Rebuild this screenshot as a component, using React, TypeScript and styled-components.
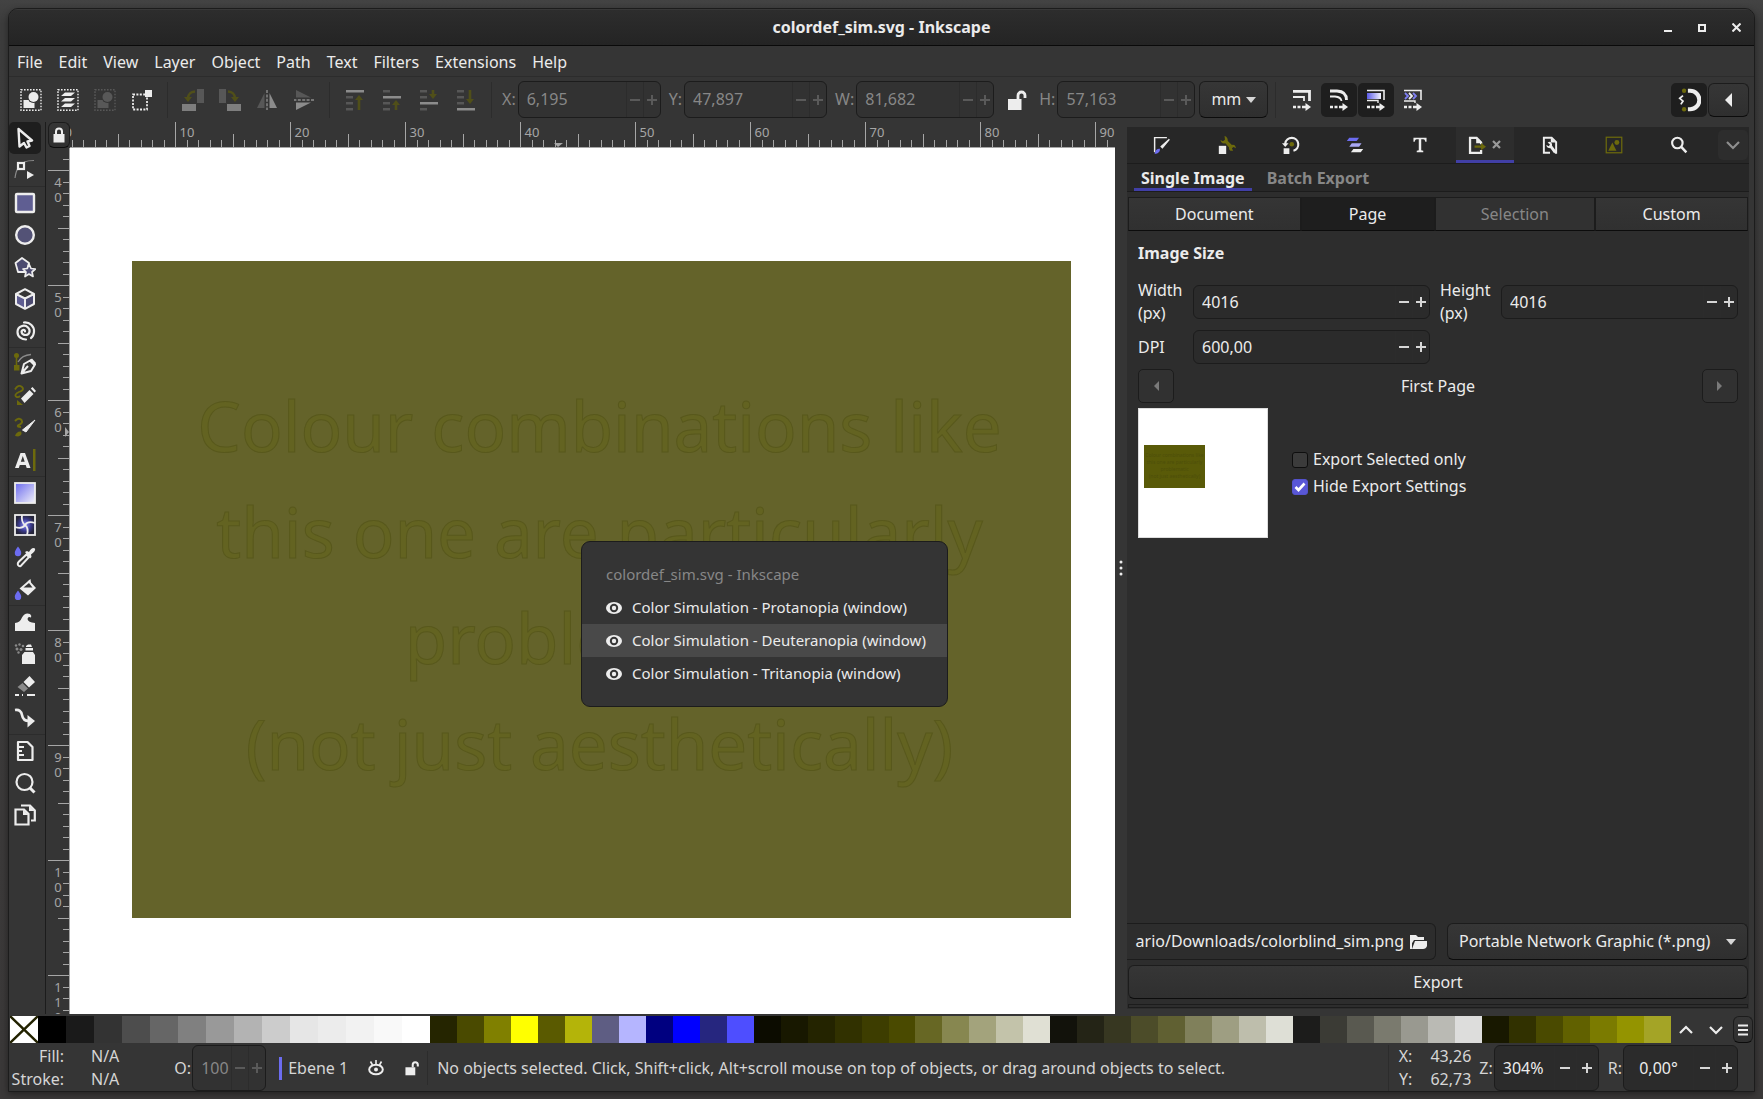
import React, { ReactNode, useId } from "react";
import styled, { createGlobalStyle, css } from "styled-components";

const c = {
  window: "#353535",
  panel: "#2d2d2d",
  strip: "#272727",
  edge: "#1c1c1c",
  line: "#2c2c2c",
  text: "#ebebeb",
  soft: "#d6d6d6",
  dim: "#878787",
  faint: "#5a5a5a",
  ruler: "#a6a6a6",
  accent: "#413fa6",
  blue: "#6c6cf0",
  olive: "#6d6a0c",
  pressed: "#1e1e1e",
};

const GlobalStyle = createGlobalStyle`
  * { box-sizing: border-box; }
  html, body, #root { height: 100%; }
  body {
    margin: 0;
    background: #3c3c3c;
    color: ${c.text};
    font: 16px/23px "Noto Sans", "Open Sans", sans-serif;
  }
  button, input, select { font: inherit; color: inherit; margin: 0; }
  button { padding: 0; }
  svg { display: block; flex: none; }
`;

/* ---------- window frame ---------- */

const Desktop = styled.div`
  height: 100vh;
  min-height: 700px;
  padding: 8px 8px 7px;
  background: linear-gradient(#434343, #3c3c3c 24px, #3a3838);
`;

const Window = styled.div`
  height: 100%;
  display: flex;
  flex-direction: column;
  overflow: hidden;
  background: ${c.window};
  border: 1px solid ${c.edge};
  border-radius: 10px 10px 0 0;
  box-shadow: 0 2px 6px rgba(0, 0, 0, 0.4);
`;

const TitleBar = styled.header`
  height: 37px;
  flex: none;
  display: grid;
  grid-template-columns: 1fr auto 1fr;
  align-items: center;
  background: linear-gradient(#2d2d2d, #242424);
  border-top: 1px solid #383838;
  border-bottom: 1px solid #0a0a0a;
`;

const Title = styled.h1`
  grid-column: 2;
  margin: 0;
  font-size: 16px;
  font-weight: 700;
`;

const WindowButtons = styled.div`
  display: flex;
  justify-content: flex-end;
  padding-right: 1px;
`;

const WindowButton = styled.button`
  width: 34px;
  height: 30px;
  display: grid;
  place-items: center;
  border: 0;
  background: none;
`;

const MenuBar = styled.nav`
  height: 31px;
  flex: none;
  display: flex;
  align-items: center;
  padding-top: 2px;
  border-bottom: 1px solid ${c.line};
`;

const MenuItem = styled.button`
  padding: 0 8px;
  border: 0;
  background: none;
`;

/* ---------- shared parts ---------- */

const raised = css`
  background: linear-gradient(#363636, #2f2f2f);
  border: 1px solid ${c.edge};
  border-bottom-color: #0c0c0c;
`;

const Bar = styled.div<{ $h?: number }>`
  width: 1px;
  height: ${(p) => p.$h ?? 36}px;
  background: ${c.line};
  flex: none;
`;

const IconButton = styled.button<{ $on?: boolean; $w?: number; $h?: number }>`
  width: ${(p) => p.$w ?? 37}px;
  height: ${(p) => p.$h ?? 34}px;
  flex: none;
  display: grid;
  place-items: center;
  border: 0;
  border-radius: 5px;
  background: ${(p) => (p.$on ? c.pressed : "none")};
`;

const RaisedButton = styled.button<{ $w?: number; $h?: number }>`
  ${raised}
  width: ${(p) => (p.$w ? p.$w + "px" : "auto")};
  height: ${(p) => p.$h ?? 34}px;
  flex: none;
  display: grid;
  place-items: center;
  border-radius: 6px;
`;

const SpinBox = styled.div<{ $w?: number; $h: number; $off?: boolean }>`
  display: flex;
  width: ${(p) => (p.$w ? p.$w + "px" : "100%")};
  height: ${(p) => p.$h}px;
  flex: ${(p) => (p.$w ? "none" : "1")};
  overflow: hidden;
  border: 1px solid ${c.edge};
  border-radius: 6px;
  background: ${(p) => (p.$off ? "#323232" : "#2b2b2b")};
  color: ${(p) => (p.$off ? c.dim : c.text)};
`;

const SpinInput = styled.input<{ $pad: number; $center?: boolean }>`
  flex: 1;
  min-width: 0;
  width: 0;
  border: 0;
  outline: 0;
  background: none;
  padding: 0 0 0 ${(p) => p.$pad}px;
  text-align: ${(p) => (p.$center ? "center" : "left")};
`;

const SpinStep = styled.button<{ $w: number; $off?: boolean }>`
  width: ${(p) => p.$w}px;
  flex: none;
  display: grid;
  place-items: center;
  border: 0;
  border-left: 1px solid ${c.line};
  background: none;
  color: ${(p) => (p.$off ? c.faint : c.soft)};
`;

function Spin(p: {
  id: string;
  value: string;
  w?: number;
  h: number;
  step?: number;
  off?: boolean;
  pad?: number;
  center?: boolean;
}) {
  const step = p.step ?? 17;
  return (
    <SpinBox $w={p.w} $h={p.h} $off={p.off}>
      <SpinInput id={p.id} defaultValue={p.value} $pad={p.pad ?? 8} $center={p.center} disabled={p.off} />
      <SpinStep $w={step} $off={p.off} disabled={p.off} aria-label="Decrease">
        <svg width="10" height="10" viewBox="0 0 10 10">
          <path d="M0 5H10" stroke="currentColor" strokeWidth="2" />
        </svg>
      </SpinStep>
      <SpinStep $w={step} $off={p.off} disabled={p.off} aria-label="Increase">
        <svg width="10" height="10" viewBox="0 0 10 10">
          <path d="M0 5H10M5 0V10" stroke="currentColor" strokeWidth="2" />
        </svg>
      </SpinStep>
    </SpinBox>
  );
}

const SelectWrap = styled.div<{ $w?: number; $h: number }>`
  display: grid;
  width: ${(p) => (p.$w ? p.$w + "px" : "100%")};
  height: ${(p) => p.$h}px;
  align-items: center;
  > * {
    grid-area: 1 / 1;
  }
  > svg {
    justify-self: end;
    margin-right: 12px;
    pointer-events: none;
  }
`;

const Select = styled.select`
  ${raised}
  appearance: none;
  width: 100%;
  height: 100%;
  padding: 0 11px;
  border-radius: 6px;
`;

const Caret = () => (
  <svg width="10" height="6" viewBox="0 0 10 6">
    <path d="M0 0H10L5 6Z" fill={c.soft} />
  </svg>
);

/* ---------- icons ---------- */

function Icon({ size = 22, children }: { size?: number; children: ReactNode }) {
  return (
    <svg width={size} height={size} viewBox="0 0 22 22" fill="none">
      {children}
    </svg>
  );
}

const W = "#ededed";
const dots = { strokeWidth: 1.4, strokeDasharray: "1.6 1.4" };

const SelectAll = ({ f = W }: { f?: string }) => (
  <Icon>
    <rect x="1" y="0.7" width="20" height="20.6" stroke={f} {...dots} />
    <rect x="3.5" y="11" width="11" height="8" fill={f} />
    <circle cx="13.5" cy="8" r="6" fill={c.window} />
    <circle cx="13.5" cy="8" r="5" fill={f} />
  </Icon>
);

const SelectLayers = () => (
  <Icon>
    <rect x="1" y="0.7" width="20" height="20.6" stroke={W} {...dots} />
    <path d="M8 3.5H18L14 7H4ZM8 9H18L14 12.5H4ZM8 14.5H18L14 18H4Z" fill={W} />
  </Icon>
);

const Deselect = () => (
  <Icon>
    <rect x="2" y="5.5" width="14" height="15" stroke={W} strokeWidth="1.8" strokeDasharray="2 1.4" />
    <rect x="14" y="1" width="7" height="7" fill={W} />
  </Icon>
);

const dimOlive = "#504f19";

const Rotate = ({ cw }: { cw?: boolean }) => (
  <Icon>
    <g transform={cw ? "matrix(-1 0 0 1 22 0)" : undefined}>
      <rect x="15" y="0" width="7" height="14" fill="#575757" />
      <rect x="0" y="15" width="14" height="7" fill="#7e7e7e" />
      <path d="M13 2.5C8 3 6.5 5 6 9" stroke={dimOlive} strokeWidth="2.6" />
      <path d="M2 8H10L6 13Z" fill={dimOlive} />
    </g>
  </Icon>
);

const Flip = ({ v }: { v?: boolean }) => (
  <Icon>
    <g transform={v ? "rotate(90 11 11)" : undefined}>
      <path d="M8.5 4V19H1Z" fill="#575757" />
      <path d="M13.5 4V19H21Z" fill="#8c8c8c" />
      <path d="M11 1V21" stroke="#8c8c8c" strokeWidth="1.4" strokeDasharray="3 1.4" />
    </g>
  </Icon>
);

const Order = ({ at, up, long }: { at: number; up?: boolean; long?: boolean }) => {
  const rows = [1, 7, 13, 19];
  const a = up ? (long ? 6 : 11) : 1;
  const b = up ? 21 : long ? 15 : 10;
  return (
    <Icon>
      {rows.map((y, i) => (
        <rect key={y} x="2" y={y} width={i === at ? 18 : 7} height="2.5" fill={i === at ? "#8c8c8c" : "#575757"} />
      ))}
      <path d={`M15 ${up ? a + 4 : a}V${up ? b : b - 4}`} stroke={dimOlive} strokeWidth="2.6" />
      <path d={up ? `M11 ${a + 5}H19L15 ${a}Z` : `M11 ${b - 5}H19L15 ${b}Z`} fill={dimOlive} />
    </Icon>
  );
};

const LockOpen = ({ size = 22 }: { size?: number }) => (
  <Icon size={size}>
    <rect x="2" y="10" width="13.5" height="11" fill={W} />
    <path d="M12 10V6.5A3.5 3.5 0 0 1 19 6.5V9" stroke={W} strokeWidth="2.8" />
  </Icon>
);

const LockClosed = () => (
  <svg width="12" height="16" viewBox="0 0 12 16" fill="none">
    <rect x="0.5" y="7" width="11" height="8.5" fill={W} />
    <path d="M3 7V4.5A3 3 0 0 1 9 4.5V7" stroke={W} strokeWidth="2" />
  </svg>
);

const Affect = ({ kind }: { kind: "stroke" | "corner" | "gradient" | "pattern" }) => (
  <Icon>
    <path d="M2 18H5M6.5 18H9.5M11 18H16" stroke={W} strokeWidth="2.4" />
    <path d="M14.5 14L20 18L14.5 22Z" fill={W} />
    {kind === "stroke" && (
      <>
        <path d="M2 2.3H18.5V12" stroke={W} strokeWidth="2.8" />
        <path d="M2 8H13V12" stroke={W} strokeWidth="1.8" />
      </>
    )}
    {kind === "corner" && (
      <>
        <path d="M2 2H9Q18.5 2.5 18.5 11" stroke={W} strokeWidth="2.8" />
        <path d="M2 7.5H7Q13 8 13.5 12" stroke={W} strokeWidth="1.8" />
      </>
    )}
    {kind === "gradient" && (
      <>
        <defs>
          <linearGradient id="affectFill">
            <stop offset="0" stopColor="#5b5be8" />
            <stop offset="1" stopColor="#f4f4ff" />
          </linearGradient>
        </defs>
        <path d="M2 1.500H19V11" stroke={W} strokeWidth="1.600" />
        <rect x="2" y="4" width="14" height="6" fill="url(#affectFill)" />
        <path d="M2 11.5H13V14" stroke={W} strokeWidth="1.4" />
      </>
    )}
    {kind === "pattern" && (
      <>
        <path d="M2 1.5H19V11" stroke={W} strokeWidth="1.6" />
        <path d="M3 4L6 7L3 10M11 4L14 7L11 10" stroke="#7f7ff2" strokeWidth="1.8" />
        <path d="M7 4L10 7L7 10" stroke={W} strokeWidth="1.8" />
        <path d="M2 12H13V14" stroke={W} strokeWidth="1.4" />
      </>
    )}
  </Icon>
);

const SnapIcon = () => (
  <Icon size={24}>
    <path d="M10 2.5H12A8.5 8.5 0 0 1 12 19.5H10" stroke={W} strokeWidth="3.8" />
    <circle cx="6.5" cy="2.5" r="2" fill={c.olive} />
    <circle cx="6.5" cy="19.5" r="2" fill={c.olive} />
    <path d="M5.500 7L2.5 9.5L5.5 12L3.5 15" stroke={W} strokeWidth="1.6" />
  </Icon>
);

const tools: Record<string, ReactNode> = {
  Selector: <path d="M4.500 2L18 13.5L13.5 14.5L15.5 19L12.500 20.5L10 16L5.500 19.5Z" stroke={W} strokeWidth="2.4" strokeLinejoin="round" />,
  Node: (
    <>
      <path d="M1 19Q2 11 5 8M10 3Q14 1.5 20 1.5" stroke="#8a8a8a" strokeWidth="1.2" />
      <rect x="4" y="4" width="6" height="6" stroke={W} strokeWidth="2.2" />
      <path d="M13 12L20 16L13 20Z" fill={W} />
    </>
  ),
  Rectangle: <rect x="2" y="2" width="18" height="18" rx="1" fill="#5f5e92" stroke={W} strokeWidth="2.4" />,
  Ellipse: <circle cx="11" cy="11" r="8.8" fill="#535276" stroke={W} strokeWidth="2.4" />,
  Star: (
    <>
      <path d="M8 2L15 7L12.5 16H4L1.5 7Z" fill="#4b4a70" stroke={W} strokeWidth="1.8" strokeLinejoin="round" />
      <path d="M15 8L17 12.5L21.3 13L18 16L19 20.5L15 18L11 20.5L12 16L9 13L13.3 12.5Z" fill="#4b4a70" stroke={W} strokeWidth="1.7" strokeLinejoin="round" />
    </>
  ),
  Box: (
    <>
      <path d="M2 6L11 10.5V20.5L2 16Z" fill="#5f5e92" />
      <path d="M20 6L11 10.5V20.5L20 16Z" fill="#4b4a70" />
      <path d="M11 1.2L20 6V16L11 20.8L2 16V6ZM2 6L11 10.5L20 6M11 10.5V20" stroke={W} strokeWidth="2" strokeLinejoin="round" />
    </>
  ),
  Spiral: <path d="M11 11.5Q11 9.5 9 10C6.5 11 7.5 15 11.5 15C15.5 15 17 10.5 14 7.5C10.5 4 3.5 6 3.5 12C3.5 17 8 19.5 12 19.5M10 2.5C16 2 20.5 6.5 20 12Q19.5 16.5 17 18" stroke={W} strokeWidth="2.2" strokeLinecap="round" />,
  Pen: (
    <>
      <path d="M2.5 2V16" stroke={c.olive} strokeWidth="1.6" />
      <circle cx="2.5" cy="2.5" r="2.5" fill={c.olive} />
      <rect x="0" y="12" width="5.5" height="5.5" fill={c.olive} />
      <path d="M4 9Q8 2 17 1.5" stroke="#8a8a8a" strokeWidth="1.3" />
      <path d="M7.5 20.5L10 11L17 7L21 11.5L17 18L7.5 20.5L14 13" stroke={W} strokeWidth="2" strokeLinejoin="round" />
      <path d="M15 8L18 5.5L22 10L20 13Z" fill={W} />
    </>
  ),
  Pencil: (
    <>
      <path d="M1 4.500Q4 -1 8 2Q11 5 5 7Q0 9.500 2 11.500Q4 13 6 11" stroke={c.olive} strokeWidth="1.8" />
      <path d="M3 15L9 20H3Z" fill={c.olive} />
      <path d="M7 13.5L15.5 5L19.5 9L10.5 18Z" fill={W} />
      <path d="M16.8 3.5L18.5 2L22 6L20.5 7.5Z" fill={W} />
    </>
  ),
  Calligraphy: (
    <>
      <path d="M1 4Q5 0 7.5 3Q9.5 6 4 8.500Q3 10 7 10" stroke={c.olive} strokeWidth="2" />
      <path d="M1 19Q2.5 14 7 14.5Q9 18 4 19.5Z" fill={c.olive} />
      <path d="M21 3L12 15L8.5 13Z" fill={W} stroke={W} />
    </>
  ),
  Text: (
    <>
      <path d="M1 19L6.5 4H11L16.5 19H12.7L11.7 16H5.8L4.8 19ZM6.8 12.8H10.7L8.8 7Z" fill={W} fillRule="evenodd" />
      <rect x="19" y="0" width="2.5" height="22" fill={c.olive} />
    </>
  ),
  Gradient: (
    <>
      <defs>
        <linearGradient id="toolGradient" x1="0" y1="0" x2="1" y2="1">
          <stop offset="0" stopColor="#6a69ef" />
          <stop offset="1" stopColor="#f2f2f8" />
        </linearGradient>
      </defs>
      <rect x="1" y="1" width="20" height="20" fill="url(#toolGradient)" stroke={W} strokeWidth="1.8" />
    </>
  ),
  Mesh: (
    <>
      <defs>
        <radialGradient id="toolMesh">
          <stop offset="0" stopColor="#8c8cff" />
          <stop offset="0.6" stopColor="#3a3a8c" />
          <stop offset="1" stopColor="#25253a" />
        </radialGradient>
      </defs>
      <rect x="1" y="1" width="20" height="20" fill="url(#toolMesh)" stroke={W} strokeWidth="1.8" />
      <path d="M8 1Q7 8 11 11Q15 14 13 21M1 13Q8 15.500 11 11Q14 6.500 21 9" stroke={W} strokeWidth="1.8" />
    </>
  ),
  Dropper: (
    <>
      <path d="M4 0.5Q7.5 5 7.2 7A3.2 3.2 0 0 1 0.8 7Q0.5 5 4 0.5Z" fill={c.blue} />
      <path d="M5 20Q2.5 18 5 15.5L12.5 8.5L15 11L8 18.5Q6.5 21 5 20Z" stroke={W} strokeWidth="2" />
      <path d="M11 6L13 5L15 6Q18 0.5 21 2.5Q22 5 17 8.5L17.5 11L16 12.5Z" fill={W} />
    </>
  ),
  Bucket: (
    <>
      <path d="M4 12.5Q7.5 17 7.2 19A3.2 3.2 0 0 1 0.8 19Q0.5 17 4 12.5Z" fill={c.blue} />
      <path d="M14.5 2.5L16.5 1L17 4.5L22 10L14 17.5L5.5 10.5L13 4Z" fill={W} />
      <path d="M9.5 9.5L15 5L18.5 9.5Z" fill={c.window} />
    </>
  ),
  Tweak: <path d="M1 20V12Q6 11.5 8 6.5Q11 1 16 3Q18 4.5 17 6.5Q14 5 13.5 8Q14 11.5 21 12V20Z" fill={W} />,
  Spray: (
    <>
      <path d="M12 3L14 1.5H17L18 4H12ZM11.5 5H19V7.5H11.5ZM8 12L10.5 9H19L21 12V21H8Z" fill={W} />
      <g fill="#8a8a8a">
        <circle cx="2" cy="2.5" r="1.2" />
        <circle cx="5.5" cy="1.5" r="1.2" />
        <circle cx="9" cy="3" r="1.3" />
        <circle cx="3" cy="6" r="1.5" />
        <circle cx="7" cy="6.5" r="1.5" />
        <circle cx="4.5" cy="9.5" r="1.2" />
      </g>
    </>
  ),
  Eraser: (
    <>
      <path d="M9.5 7L15.5 1L21 7L15 12.5Z" fill={W} />
      <path d="M8.5 8L14 13.5L10 17L3.5 12Z" fill="#8a8a8a" />
      <path d="M1 20H5M8 20H9M13 20H21" stroke={W} strokeWidth="2.2" />
    </>
  ),
  Connector: (
    <>
      <path d="M1 3Q7 2 8 8Q9 14 15 14" stroke={W} strokeWidth="2.6" />
      <path d="M13.5 8L21 14L13.5 20.5Z" fill={W} />
    </>
  ),
  Measure: (
    <>
      <path d="M4 2H13.5L18.5 7V20H4Z" stroke={W} strokeWidth="2.2" strokeLinejoin="round" />
      <path d="M4 7H10M4 11H8M4 15H10" stroke={W} strokeWidth="1.8" />
    </>
  ),
  Zoom: (
    <>
      <circle cx="10.5" cy="10" r="8" stroke={W} strokeWidth="2.2" />
      <path d="M15.5 15.5L20.5 20.5" stroke={W} strokeWidth="3" />
    </>
  ),
  Pages: (
    <>
      <path d="M1.5 5.5H10L14.5 10V20.5H1.5Z" stroke={W} strokeWidth="2.2" />
      <path d="M7 1.5H16L20.8 6.5V16.5H17" stroke={W} strokeWidth="2.2" />
      <path d="M9 5.5V11H14.5ZM15 1.5V7H20.5Z" fill={W} />
    </>
  ),
};

const toolGroups = [
  ["Selector", "Node"],
  ["Rectangle", "Ellipse", "Star", "Box", "Spiral"],
  ["Pen", "Pencil", "Calligraphy", "Text"],
  ["Gradient", "Mesh", "Dropper", "Bucket"],
  ["Tweak", "Spray", "Eraser", "Connector"],
  ["Measure", "Zoom", "Pages"],
];

const dockIcons: Record<string, ReactNode> = {
  Fill: (
    <>
      <path d="M2 20V2H17" stroke={W} strokeWidth="1.8" />
      <path d="M20 4L11.500 14.500L10 13Z" fill={W} stroke={W} strokeWidth="1.600" />
      <path d="M2 22Q3 15 8.5 15.500Q9 21 2 22Z" fill={c.blue} />
    </>
  ),
  Properties: (
    <>
      <path d="M8 0Q12 1 12 6L17 11Q21 10 22 15L19 13.500L17 15L18.500 18Q13 19 13.500 14L9 9Q4 10 3 5L6 6.500L8.500 4.500Z" fill={c.olive} />
      <rect x="1" y="12" width="9" height="10" fill={W} />
    </>
  ),
  Transform: (
    <>
      <path d="M4 10V9A8 8 0 1 1 14 18" stroke={W} strokeWidth="2.6" />
      <path d="M0 9H8L4 13.500Z" fill={W} />
      <circle cx="12" cy="10" r="2.8" fill={c.olive} />
      <rect x="2" y="15" width="7" height="7" fill={W} />
    </>
  ),
  Layers: (
    <>
      <path d="M4 2H16L13 6H1Z" fill={c.blue} />
      <path d="M7 9H19L16 13H4Z" fill="#a9a8f5" />
      <path d="M9 16H21L18 20H6Z" fill={W} />
    </>
  ),
  Text: <path d="M3 2H19V7H17.5Q17 4 15 4H12.5V17.5L15 18V20H7V18L9.5 17.5V4H7Q5 4 4.5 7H3Z" fill={W} />,
  Export: (
    <>
      <path d="M16 10V8L10.500 2.200H2.500V20.500H16V17" stroke={W} strokeWidth="2.8" />
      <path d="M10 2V9H16Z" fill={W} />
      <path d="M8 13H17" stroke={c.olive} strokeWidth="2.6" />
      <path d="M16 8.5L22 13L16 17.5Z" fill={c.olive} />
    </>
  ),
  Document: (
    <>
      <path d="M11 20.500H3.500V2.200H13L18.500 7.500V20.500H17" stroke={W} strokeWidth="2.4" />
      <path d="M12 2V8H18Z" fill={W} />
      <path d="M8 8L10.500 7Q14 8 13.500 12L19 19L16 21L11.500 15Q7 15 6.500 11L9.500 12.500L11 10.500Z" fill={W} />
    </>
  ),
  Image: (
    <>
      <rect x="1.5" y="1.5" width="19" height="19" stroke={c.olive} strokeWidth="1.5" />
      <path d="M4 18L9 8L14 18Z" fill={c.olive} />
      <circle cx="14.500" cy="8" r="3" fill={c.olive} />
    </>
  ),
  Search: (
    <>
      <circle cx="9" cy="8.5" r="6.4" stroke={W} strokeWidth="2.6" />
      <path d="M13.5 13L20 20" stroke={W} strokeWidth="3" />
    </>
  ),
};

const Chevron = ({ up, color = W }: { up?: boolean; color?: string }) => (
  <svg width="14" height="10" viewBox="0 0 14 10" fill="none">
    <path d={up ? "M1 8L7 2L13 8" : "M1 2L7 8L13 2"} stroke={color} strokeWidth="2.2" />
  </svg>
);

const Triangle = ({ left, color, h = 14 }: { left?: boolean; color: string; h?: number }) => (
  <svg width={h / 2} height={h} viewBox="0 0 7 14">
    <path d={left ? "M7 0V14L0 7Z" : "M0 0V14L7 7Z"} fill={color} />
  </svg>
);

const Eye = () => (
  <svg width="16" height="12" viewBox="0 0 16 12">
    <ellipse cx="8" cy="6" rx="8" ry="6" fill={W} />
    <circle cx="8" cy="6" r="4.2" fill={c.window} />
    <circle cx="8" cy="6" r="2.2" fill={W} />
  </svg>
);

/* ---------- tool controls bar ---------- */

const ToolControls = styled.div`
  height: 45px;
  flex: none;
  display: flex;
  align-items: center;
  padding: 0 5px 0 3px;
`;

const Divider = styled(Bar)`
  margin: 0 6px 0 7px;
`;

const Field = styled.div`
  display: flex;
  align-items: center;
  gap: 2px;
  padding: 0 4px;
  color: ${c.dim};
`;

const Spring = styled.div`
  flex: 1;
`;

const ButtonRow = styled.div<{ $pad?: number }>`
  display: flex;
  gap: 1px;
  padding-left: ${(p) => p.$pad ?? 0}px;
`;

function Coordinate({ name, value, w }: { name: string; value: string; w: number }) {
  const id = useId();
  return (
    <Field>
      <label htmlFor={id}>{name}:</label>
      <Spin id={id} value={value} w={w} h={37} off />
    </Field>
  );
}

/* ---------- work area ---------- */

const WorkArea = styled.div`
  flex: 1;
  min-height: 0;
  display: flex;
  padding-right: 5px;
`;

const Toolbox = styled.div`
  width: 37px;
  flex: none;
  border-right: 1px solid ${c.edge};
`;

const ToolGroup = styled.div`
  & + & {
    border-top: 1px solid ${c.line};
  }
`;

const CanvasGrid = styled.div`
  flex: 1;
  min-width: 0;
  display: grid;
  grid-template-columns: 24px 1fr;
  grid-template-rows: 26px 1fr;
`;

const RulerLock = styled(RaisedButton)`
  justify-self: end;
  width: 22px;
  height: 26px;
`;

const RulerTop = styled.div`
  overflow: hidden;
  border-bottom: 1px solid ${c.ruler};
`;

const RulerLeft = styled.div`
  overflow: hidden;
  min-height: 0;
  border-right: 1px solid ${c.ruler};
`;

const RulerSvg = styled.svg`
  width: 100%;
  height: 100%;
  font-size: 13px;
`;

const STEP = 11.5;

function HorizontalRuler() {
  const at = (n: number) => Math.round(n * STEP - 10) + 0.5;
  const marks = Array.from({ length: 92 }, (_, n) => n);
  return (
    <RulerSvg>
      {marks.map((n) => (
        <path key={n} d={`M${at(n)} ${n % 10 === 0 ? 0 : n % 5 === 0 ? 12 : 18}V25`} stroke={c.ruler} />
      ))}
      {marks
        .filter((n) => n % 10 === 0)
        .map((n) => (
          <text key={n} x={at(n) + 4} y="15" fill={c.ruler}>
            {n}
          </text>
        ))}
      <path d="M484 21H493L488 25Z" fill={c.ruler} />
    </RulerSvg>
  );
}

function VerticalRuler() {
  const at = (n: number) => Math.round((n - 40) * STEP + 22) + 0.5;
  const marks = Array.from({ length: 80 }, (_, i) => i + 39);
  return (
    <RulerSvg>
      {marks.map((n) => (
        <path key={n} d={`M${n % 10 === 0 ? 2 : n % 5 === 0 ? 12 : 17} ${at(n)}H23`} stroke={c.ruler} />
      ))}
      {marks
        .filter((n) => n % 10 === 0)
        .map((n) =>
          String(n)
            .split("")
            .map((d, i) => (
              <text key={n + "-" + i} x="12" y={at(n) + 16 + i * 15} textAnchor="middle" fill={c.ruler}>
                {d}
              </text>
            )),
        )}
      <path d="M19 279V289L23 284Z" fill={c.ruler} />
    </RulerSvg>
  );
}

const Canvas = styled.main`
  position: relative;
  overflow: hidden;
  min-height: 0;
  background: #fff;
`;

const ArtRect = styled.div`
  position: absolute;
  left: 62px;
  top: 113px;
  width: 939px;
  height: 657px;
  padding: 111px 4px 0 0;
  background: #64632a;
  text-align: center;
`;

const ArtLine = styled.p`
  margin: 0;
  font-size: 69px;
  line-height: 106px;
  white-space: nowrap;
  color: #636321;
  -webkit-text-stroke: 1px #58581c;
`;

const Popup = styled.div`
  position: absolute;
  left: 511px;
  top: 393px;
  width: 367px;
  padding: 16px 0;
  background: #343434;
  border: 1px solid ${c.edge};
  border-radius: 9px;
  font-size: 15px;
`;

const PopupTitle = styled.div`
  padding: 0 24px;
  line-height: 33px;
  color: ${c.dim};
`;

const PopupItem = styled.button<{ $hot?: boolean }>`
  width: 100%;
  height: 33px;
  display: flex;
  align-items: center;
  gap: 10px;
  padding: 0 0 0 24px;
  border: 0;
  white-space: nowrap;
  background: ${(p) => (p.$hot ? "#494949" : "none")};
`;

const Grip = styled.div`
  width: 12px;
  flex: none;
  display: grid;
  place-items: center;
`;

/* ---------- export dock ---------- */

const Dock = styled.aside`
  width: 622px;
  flex: none;
  display: flex;
  flex-direction: column;
  margin: 5px 0;
  background: ${c.panel};
`;

const DockTabs = styled.div`
  height: 37px;
  flex: none;
  display: flex;
  padding-left: 3px;
  background: ${c.strip};
  border-bottom: 1px solid ${c.edge};
`;

const DockTab = styled.button<{ $on?: boolean }>`
  flex: ${(p) => (p.$on ? "0 0 58px" : "1")};
  margin: 0 ${(p) => (p.$on ? 4 : 0)}px;
  display: flex;
  align-items: center;
  justify-content: center;
  gap: 6px;
  padding-top: 2px;
  border: 0;
  border-bottom: 3px solid ${(p) => (p.$on ? c.accent : "transparent")};
  background: ${(p) => (p.$on ? c.panel : "none")};
`;

const MoreTabs = styled.button`
  width: 30px;
  height: 30px;
  align-self: center;
  display: grid;
  place-items: center;
  border: 0;
  border-radius: 5px;
  background: #2d2d2d;
  margin: 0 1px 0 7px;
`;

const SubTabs = styled.div`
  height: 28px;
  flex: none;
  display: flex;
  gap: 8px;
  padding: 0 7px;
  background: ${c.strip};
  border-bottom: 1px solid ${c.edge};
`;

const SubTab = styled.button<{ $on?: boolean }>`
  padding: 4px 7px 0;
  border: 0;
  border-bottom: 3px solid ${(p) => (p.$on ? c.accent : "transparent")};
  background: none;
  font-weight: 700;
  line-height: 20px;
  color: ${(p) => (p.$on ? c.text : c.dim)};
`;

const AreaButtons = styled.div`
  display: grid;
  grid-template-columns: 173fr 134fr 161fr 153fr;
  height: 34px;
  flex: none;
  margin: 5px 1px 0;
`;

const AreaButton = styled.button<{ $on?: boolean }>`
  ${raised}
  background: ${(p) => (p.$on ? c.pressed : "linear-gradient(#353535, #303030)")};
  color: ${c.text};
  &:disabled {
    color: ${c.dim};
    background: #313131;
  }
`;

const DockBody = styled.div`
  flex: 1;
  min-height: 0;
  display: flex;
  flex-direction: column;
  gap: 5px;
  padding: 11px 11px 0;
`;

const Heading = styled.h2`
  margin: 0 0 9px;
  font-size: 16px;
  line-height: 23px;
`;

const SizeGrid = styled.div`
  display: grid;
  grid-template-columns: 55px 1fr 71px 1fr;
  align-items: center;
  gap: 5px 0;
`;

const SizeLabel = styled.label<{ $indent?: boolean }>`
  padding-left: ${(p) => (p.$indent ? 10 : 0)}px;
`;

const PageNav = styled.div`
  display: flex;
  align-items: center;
  justify-content: space-between;
`;

const NavButton = styled.button`
  width: 36px;
  height: 34px;
  display: grid;
  place-items: center;
  border: 1px solid ${c.edge};
  border-radius: 5px;
  background: #313131;
`;

const PreviewRow = styled.div`
  display: flex;
  align-items: center;
  gap: 24px;
`;

const Preview = styled.div`
  width: 130px;
  height: 130px;
  padding: 36px 0 0 5px;
  background: #fff;
  border: 1px solid #ddd;
`;

const PreviewArt = styled.div`
  width: 61px;
  height: 43px;
  padding-top: 7px;
  background: #595a08;
  color: #4d4e08;
  font-size: 5px;
  line-height: 7px;
  text-align: center;
  white-space: nowrap;
`;

const Options = styled.div`
  display: flex;
  flex-direction: column;
  gap: 4px;
`;

const Check = styled.label`
  display: flex;
  align-items: center;
  gap: 5px;
`;

const CheckInput = styled.input`
  appearance: none;
  width: 16px;
  height: 16px;
  border: 1px solid #0e0e0e;
  border-radius: 3px;
  background: #3b3b3b;
  &:checked {
    border-color: #5452cc;
    background: #5957d6;
  }
`;

const CheckCell = styled.span`
  display: grid;
  > * {
    grid-area: 1 / 1;
    place-self: center;
  }
  > svg {
    pointer-events: none;
  }
`;

const FileRow = styled.div`
  display: grid;
  grid-template-columns: 309fr 301fr;
  gap: 11px;
  margin: 0 1px 5px 0;
`;

const PathBox = styled.div`
  height: 37px;
  min-width: 0;
  display: flex;
  align-items: center;
  gap: 6px;
  padding: 0 8px;
  border: 1px solid ${c.edge};
  border-left: 0;
  border-radius: 0 6px 6px 0;
`;

const PathInput = styled.input`
  flex: 1;
  min-width: 0;
  border: 0;
  outline: 0;
  padding: 0;
  text-align: right;
  background: none;
`;

const BareButton = styled.button`
  border: 0;
  background: none;
`;

const ExportButton = styled(RaisedButton)`
  margin: 0 1px;
`;

const DockFoot = styled.div`
  height: 4px;
  flex: none;
  margin: 5px 1px 1px;
  border: 1px solid ${c.edge};
`;

/* ---------- palette and status ---------- */

const PaletteBar = styled.div`
  height: 29px;
  flex: none;
  display: flex;
  padding: 2px 1px 0;
`;

const Swatches = styled.div`
  flex: 1;
  display: flex;
`;

const Swatch = styled.button<{ $color: string; $wide?: boolean }>`
  flex: ${(p) => (p.$wide ? 28 : 27)};
  border: 0;
  background: ${(p) => p.$color};
`;

const PaletteMenu = styled(RaisedButton)`
  margin-left: 2px;
`;

const grays = "#000000 #1a1a1a #333333 #4d4d4d #666666 #808080 #999999 #b3b3b3 #cccccc #e6e6e6 #ececec #f2f2f2 #f9f9f9 #ffffff".split(" ");
const hues = (
  "#252500 #4a4a00 #808000 #ffff00 #5a5a00 #b4b409 #5e5d83 #b5b5ff #000080 #0000ff #26267f #4e4eff " +
  "#0c0c00 #181800 #242400 #313100 #3d3d00 #4a4a00 #676724 #878750 #a3a37c #c3c3aa #e0e0d4 " +
  "#12120b #242416 #373721 #4c4c29 #606032 #80805b #9e9e82 #bebeac #dedfd6 " +
  "#1c1c1b #3b3b35 #595950 #7a7a6e #999990 #babab4 #dddddc " +
  "#181800 #313100 #4a4a00 #616100 #7b7b00 #949400 #a4a426"
).split(" ");

const StatusBar = styled.footer`
  height: 48px;
  flex: none;
  display: flex;
  align-items: center;
  padding: 2px 16px 0 0;
  color: ${c.soft};
`;

const Pairs = styled.div<{ $label: number; $gap: number }>`
  display: grid;
  grid-template-columns: ${(p) => p.$label}px auto;
  gap: 0 ${(p) => p.$gap}px;
  > :nth-child(odd) {
    text-align: right;
  }
`;

const StatusField = styled.div<{ $left: number }>`
  display: flex;
  align-items: center;
  gap: 1px;
  padding-left: ${(p) => p.$left}px;
`;

const LayerButton = styled.button`
  display: flex;
  align-items: center;
  gap: 6px;
  margin-left: 13px;
  border: 0;
  background: none;
`;

const LayerColor = styled.span`
  width: 3px;
  height: 23px;
  background: ${c.blue};
`;

const StatusIcon = styled(BareButton)`
  margin-left: 20px;
`;

const Message = styled.div`
  flex: 1;
  min-width: 0;
  padding-left: 3px;
  overflow: hidden;
  white-space: nowrap;
`;

const menus = ["File", "Edit", "View", "Layer", "Object", "Path", "Text", "Filters", "Extensions", "Help"];
const dockBefore = ["Fill", "Properties", "Transform", "Layers", "Text"];
const dockAfter = ["Document", "Image", "Search"];

export default function App() {
  return (
    <>
      <GlobalStyle />
      <Desktop>
        <Window>
          <TitleBar>
            <Title>colordef_sim.svg - Inkscape</Title>
            <WindowButtons>
              <WindowButton aria-label="Minimize">
                <svg width="8" height="8" viewBox="0 0 8 8">
                  <rect y="6" width="8" height="2" fill={W} />
                </svg>
              </WindowButton>
              <WindowButton aria-label="Maximize">
                <svg width="8" height="8" viewBox="0 0 8 8" fill="none">
                  <rect x="1" y="1" width="6" height="6" stroke={W} strokeWidth="2" />
                </svg>
              </WindowButton>
              <WindowButton aria-label="Close">
                <svg width="9" height="9" viewBox="0 0 9 9">
                  <path d="M0.5 0.5L8.5 8.5M8.5 0.5L0.5 8.5" stroke={W} strokeWidth="2" />
                </svg>
              </WindowButton>
            </WindowButtons>
          </TitleBar>

          <MenuBar>
            {menus.map((m) => (
              <MenuItem key={m}>{m}</MenuItem>
            ))}
          </MenuBar>

          <ToolControls>
            <IconButton aria-label="Select all"><SelectAll /></IconButton>
            <IconButton aria-label="Select all in all layers"><SelectLayers /></IconButton>
            <IconButton aria-label="Touch selection" disabled><SelectAll f="#585858" /></IconButton>
            <IconButton aria-label="Deselect"><Deselect /></IconButton>
            <Divider />
            <IconButton aria-label="Rotate left" disabled><Rotate /></IconButton>
            <IconButton aria-label="Rotate right" disabled><Rotate cw /></IconButton>
            <IconButton aria-label="Flip horizontal" disabled><Flip /></IconButton>
            <IconButton aria-label="Flip vertical" disabled><Flip v /></IconButton>
            <Divider />
            <IconButton aria-label="Raise to top" disabled><Order at={0} up long /></IconButton>
            <IconButton aria-label="Raise" disabled><Order at={1} up /></IconButton>
            <IconButton aria-label="Lower" disabled><Order at={2} /></IconButton>
            <IconButton aria-label="Lower to bottom" disabled><Order at={3} long /></IconButton>
            <Divider />
            <Coordinate name="X" value="6,195" w={143} />
            <Coordinate name="Y" value="47,897" w={143} />
            <Coordinate name="W" value="81,682" w={138} />
            <IconButton aria-label="Lock ratio"><LockOpen /></IconButton>
            <Coordinate name="H" value="57,163" w={138} />
            <SelectWrap $w={69} $h={37}>
              <Select aria-label="Unit">
                <option>mm</option>
              </Select>
              <Caret />
            </SelectWrap>
            <Divider />
            <ButtonRow $pad={2}>
              <IconButton $w={36} aria-label="Scale stroke"><Affect kind="stroke" /></IconButton>
              <IconButton $w={36} $on aria-label="Scale corners"><Affect kind="corner" /></IconButton>
              <IconButton $w={36} $on aria-label="Move gradients"><Affect kind="gradient" /></IconButton>
              <IconButton $w={36} aria-label="Move patterns"><Affect kind="pattern" /></IconButton>
            </ButtonRow>
            <Spring />
            <ButtonRow>
              <IconButton $w={36} $on aria-label="Snapping"><SnapIcon /></IconButton>
              <RaisedButton $w={41} aria-label="Snap options"><Triangle left color={W} /></RaisedButton>
            </ButtonRow>
          </ToolControls>

          <WorkArea>
            <Toolbox>
              {toolGroups.map((g) => (
                <ToolGroup key={g[0]}>
                  {g.map((t) => (
                    <IconButton key={t} $w={32} $h={32} $on={t === "Selector"} aria-label={t + " tool"}>
                      <Icon>{tools[t]}</Icon>
                    </IconButton>
                  ))}
                </ToolGroup>
              ))}
            </Toolbox>

            <CanvasGrid>
              <RulerLock aria-label="Lock guides"><LockClosed /></RulerLock>
              <RulerTop><HorizontalRuler /></RulerTop>
              <RulerLeft><VerticalRuler /></RulerLeft>
              <Canvas>
                <ArtRect>
                  <ArtLine>Colour combinations like</ArtLine>
                  <ArtLine>this one are particularly</ArtLine>
                  <ArtLine>problematic</ArtLine>
                  <ArtLine>(not just aesthetically)</ArtLine>
                </ArtRect>
                <Popup>
                  <PopupTitle>colordef_sim.svg - Inkscape</PopupTitle>
                  {["Protanopia", "Deuteranopia", "Tritanopia"].map((n) => (
                    <PopupItem key={n} $hot={n === "Deuteranopia"}>
                      <Eye />
                      Color Simulation - {n} (window)
                    </PopupItem>
                  ))}
                </Popup>
              </Canvas>
            </CanvasGrid>

            <Grip>
              <svg width="4" height="16" viewBox="0 0 4 16" fill={W}>
                <circle cx="2" cy="2" r="1.5" />
                <circle cx="2" cy="8" r="1.5" />
                <circle cx="2" cy="14" r="1.5" />
              </svg>
            </Grip>

            <Dock>
              <DockTabs>
                {dockBefore.map((t) => (
                  <DockTab key={t} aria-label={t}><Icon size={18}>{dockIcons[t]}</Icon></DockTab>
                ))}
                <DockTab $on aria-label="Export">
                  <Icon size={18}>{dockIcons.Export}</Icon>
                  <svg width="9" height="9" viewBox="0 0 9 9">
                    <path d="M1 1L8 8M8 1L1 8" stroke="#9a9a9a" strokeWidth="2.2" />
                  </svg>
                </DockTab>
                {dockAfter.map((t) => (
                  <DockTab key={t} aria-label={t}><Icon size={18}>{dockIcons[t]}</Icon></DockTab>
                ))}
                <MoreTabs aria-label="More dialogs"><Chevron color="#8f8f8f" /></MoreTabs>
              </DockTabs>
              <SubTabs>
                <SubTab $on>Single Image</SubTab>
                <SubTab>Batch Export</SubTab>
              </SubTabs>
              <AreaButtons>
                <AreaButton>Document</AreaButton>
                <AreaButton $on>Page</AreaButton>
                <AreaButton disabled>Selection</AreaButton>
                <AreaButton>Custom</AreaButton>
              </AreaButtons>
              <DockBody>
                <Heading>Image Size</Heading>
                <SizeGrid>
                  <SizeLabel htmlFor="ex-width">Width (px)</SizeLabel>
                  <Spin id="ex-width" value="4016" h={34} />
                  <SizeLabel htmlFor="ex-height" $indent>Height (px)</SizeLabel>
                  <Spin id="ex-height" value="4016" h={34} />
                  <SizeLabel htmlFor="ex-dpi">DPI</SizeLabel>
                  <Spin id="ex-dpi" value="600,00" h={34} />
                </SizeGrid>
                <PageNav>
                  <NavButton aria-label="Previous page" disabled><Triangle left h={10} color="#7a7a7a" /></NavButton>
                  <span>First Page</span>
                  <NavButton aria-label="Next page" disabled><Triangle h={10} color="#7a7a7a" /></NavButton>
                </PageNav>
                <PreviewRow>
                  <Preview>
                    <PreviewArt>
                      Colour combinations like
                      <br />
                      this one are particularly
                      <br />
                      problematic
                      <br />
                      (not just aesthetically)
                    </PreviewArt>
                  </Preview>
                  <Options>
                    <Check>
                      <CheckInput type="checkbox" />
                      Export Selected only
                    </Check>
                    <Check>
                      <CheckCell>
                        <CheckInput type="checkbox" defaultChecked />
                        <svg width="12" height="10" viewBox="0 0 12 10" fill="none">
                          <path d="M1.5 5L4.5 8L10.5 1.5" stroke="#fff" strokeWidth="2.6" />
                        </svg>
                      </CheckCell>
                      Hide Export Settings
                    </Check>
                  </Options>
                </PreviewRow>
              </DockBody>
              <FileRow>
                <PathBox>
                  <PathInput aria-label="Export path" defaultValue="ario/Downloads/colorblind_sim.png" />
                  <BareButton aria-label="Choose file">
                    <svg width="17" height="14" viewBox="0 0 17 14">
                      <path d="M0 0H6L8 2H14V5H4L1.5 9V13H0Z" fill={W} />
                      <path d="M5 6H17V11Q16 14 13 14H2Z" fill={W} />
                      <rect y="2" width="2" height="12" fill={W} />
                    </svg>
                  </BareButton>
                </PathBox>
                <SelectWrap $h={37}>
                  <Select aria-label="File format">
                    <option>Portable Network Graphic (*.png)</option>
                  </Select>
                  <Caret />
                </SelectWrap>
              </FileRow>
              <ExportButton>Export</ExportButton>
              <DockFoot />
            </Dock>
          </WorkArea>

          <PaletteBar>
            <Swatches>
              <Swatch $wide $color="#fff" aria-label="None">
                <svg width="100%" height="100%" viewBox="0 0 28 27" preserveAspectRatio="none">
                  <path d="M0 0L28 27M28 0L0 27" stroke="#222200" strokeWidth="2.4" />
                </svg>
              </Swatch>
              {grays.map((s) => (
                <Swatch key={s} $wide $color={s} aria-label={s} />
              ))}
              {hues.map((s, i) => (
                <Swatch key={i} $color={s} aria-label={s} />
              ))}
            </Swatches>
            <IconButton $w={30} $h={27} aria-label="Previous colors"><Chevron up /></IconButton>
            <IconButton $w={30} $h={27} aria-label="Next colors"><Chevron /></IconButton>
            <PaletteMenu $w={20} $h={27} aria-label="Palette menu">
              <svg width="10" height="12" viewBox="0 0 10 12">
                <path d="M0 1.5H10M0 6H10M0 10.5H10" stroke={W} strokeWidth="2" />
              </svg>
            </PaletteMenu>
          </PaletteBar>

          <StatusBar>
            <Pairs $label={55} $gap={27}>
              <span>Fill:</span>
              <span>N/A</span>
              <span>Stroke:</span>
              <span>N/A</span>
            </Pairs>
            <StatusField $left={55}>
              <label htmlFor="opacity">O:</label>
              <Spin id="opacity" value="100" w={74} h={46} off />
            </StatusField>
            <LayerButton>
              <LayerColor />
              Ebene 1
            </LayerButton>
            <StatusIcon aria-label="Layer visibility">
              <svg width="16" height="16" viewBox="0 0 16 16" fill="none">
                <path d="M8 0V4M2.5 1.5L4.5 5M13.5 1.5L11.5 5" stroke={W} strokeWidth="1.6" />
                <ellipse cx="8" cy="9.5" rx="6.8" ry="4.8" stroke={W} strokeWidth="2" />
                <circle cx="8" cy="9.5" r="2" fill={W} />
              </svg>
            </StatusIcon>
            <StatusIcon aria-label="Layer lock"><LockOpen size={16} /></StatusIcon>
            <Divider $h={34} />
            <Message>
              No objects selected. Click, Shift+click, Alt+scroll mouse on top of objects, or drag around objects to select.
            </Message>
            <Bar $h={46} />
            <Pairs $label={23} $gap={18}>
              <span>X:</span>
              <span>43,26</span>
              <span>Y:</span>
              <span>62,73</span>
            </Pairs>
            <StatusField $left={8}>
              <label htmlFor="zoom">Z:</label>
              <Spin id="zoom" value="304%" w={105} h={46} step={22} />
            </StatusField>
            <StatusField $left={9}>
              <label htmlFor="rotation">R:</label>
              <Spin id="rotation" value="0,00°" w={115} h={46} step={22} pad={0} center />
            </StatusField>
          </StatusBar>
        </Window>
      </Desktop>
    </>
  );
}
